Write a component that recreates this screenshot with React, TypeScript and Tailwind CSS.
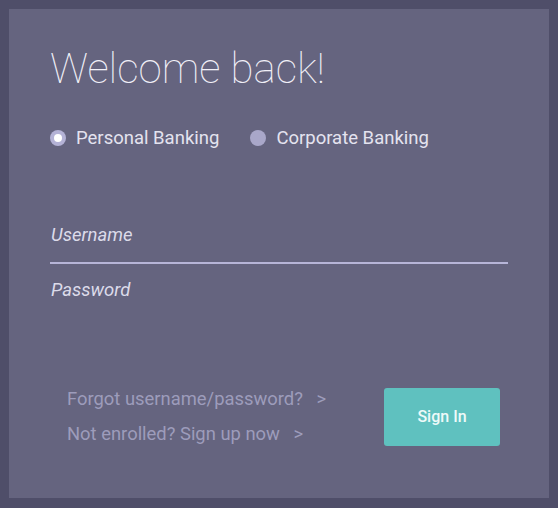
export default function App() {
  return (
    <div className="h-[508px] w-[558px] bg-[#4f4e69] p-[9px] font-['Roboto',sans-serif]">
      <div className="h-[489px] w-[540px] bg-[#65647f] pl-[41px] pr-[41px] pt-[35px]">
        <h1 className="text-[42px] font-thin leading-[50px] text-[#f1f0f8]">Welcome back!</h1>

        {/* account type */}
        <div className="mt-[33px] flex items-center gap-[31px] text-[18.5px] leading-[22px] text-[#e4e3ef]">
          <label className="flex items-center gap-[10px]">
            <span className="flex h-[16px] w-[16px] items-center justify-center rounded-full bg-[#b4b2d6]">
              <span className="h-[8px] w-[8px] rounded-full bg-white" />
            </span>
            Personal Banking
          </label>
          <label className="flex items-center gap-[10px]">
            <span className="h-[16px] w-[16px] rounded-full bg-[#a9a7c9]" />
            Corporate Banking
          </label>
        </div>

        {/* fields */}
        <div className="mt-[75px] text-[18.5px] leading-[22px]">
          <div className="border-b-2 border-[#b7b5d8] pb-[16px]">
            <span className="pl-[1px] italic text-[#dcdbea]">Username</span>
          </div>
          <div className="pt-[15px]">
            <span className="pl-[1px] italic text-[#dcdbea]">Password</span>
          </div>
        </div>

        {/* actions */}
        <div className="mt-[87px] flex items-start justify-between pl-[17px] pr-[8px]">
          <div className="flex flex-col gap-[13px] text-[18.4px] leading-[22px] text-[#9d9cbb]">
            <span>Forgot username/password?&nbsp;&nbsp;&nbsp;&gt;</span>
            <span>Not enrolled? Sign up now&nbsp;&nbsp;&nbsp;&gt;</span>
          </div>
          <button className="h-[58px] w-[116px] rounded-[3px] bg-[#5fc1bf] text-[16px] font-medium text-[#eefaf9]">
            Sign In
          </button>
        </div>
      </div>
    </div>
  );
}
